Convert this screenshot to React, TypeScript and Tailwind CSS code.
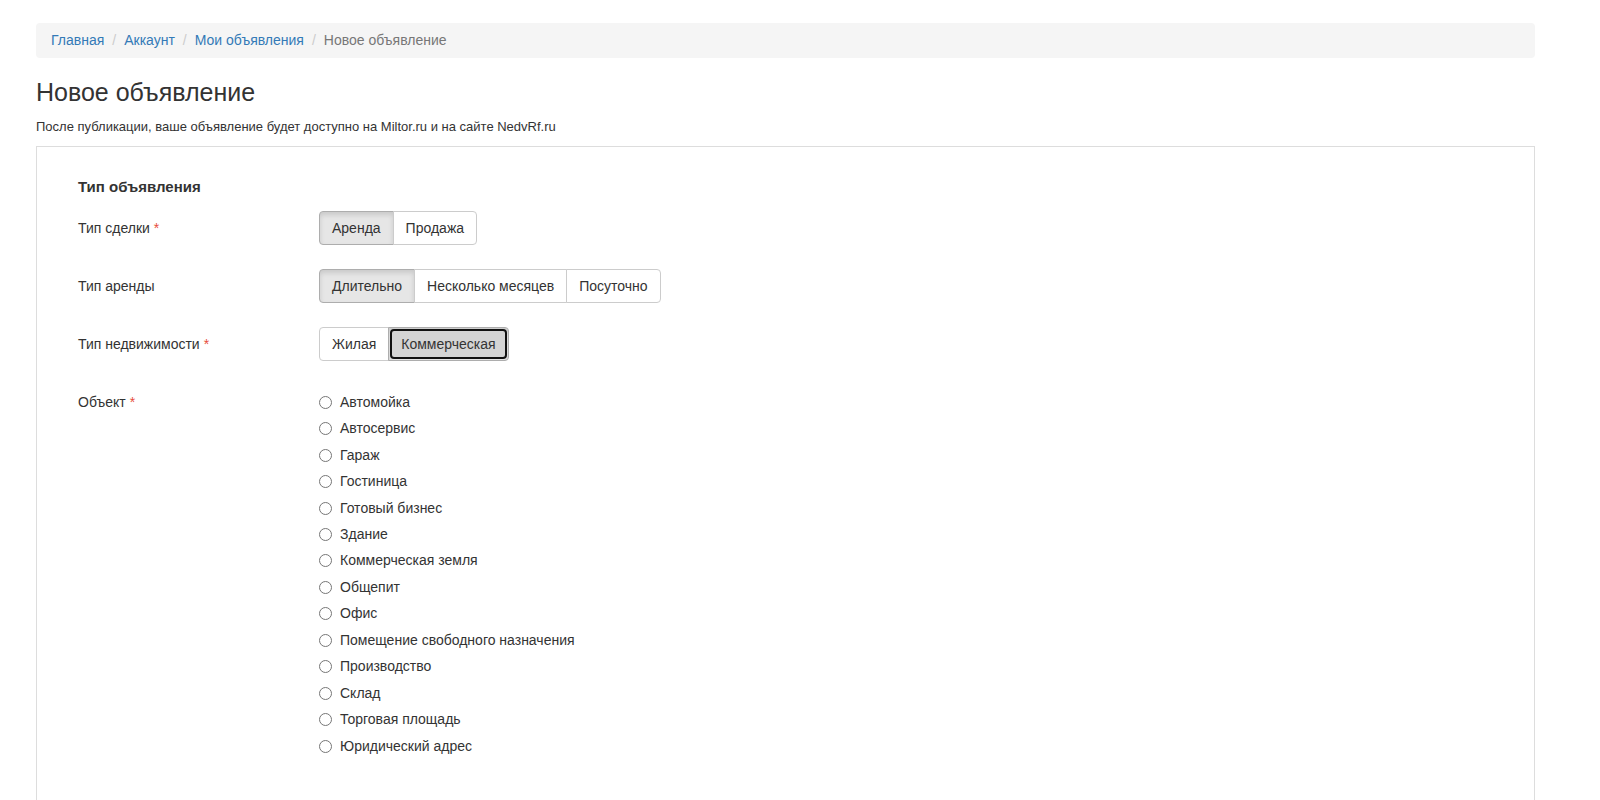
import React, { useState } from 'react';

const objects = [
  'Автомойка',
  'Автосервис',
  'Гараж',
  'Гостиница',
  'Готовый бизнес',
  'Здание',
  'Коммерческая земля',
  'Общепит',
  'Офис',
  'Помещение свободного назначения',
  'Производство',
  'Склад',
  'Торговая площадь',
  'Юридический адрес',
];

const Required = () => <span className="text-[#e74c3c] ml-1">*</span>;

interface GroupProps {
  options: string[];
  value: string;
  focused?: string;
  onChange: (v: string) => void;
}

const ButtonGroup = ({ options, value, focused, onChange }: GroupProps) => (
  <div className="flex">
    {options.map((opt, i) => {
      const active = opt === value;
      const isFocused = opt === focused;
      const first = i === 0;
      const last = i === options.length - 1;
      return (
        <button
          key={opt}
          type="button"
          onClick={() => onChange(opt)}
          className={`relative h-[34px] px-3 text-[14px] text-[#333] border ${
            first ? 'rounded-l-[4px]' : '-ml-px'
          } ${last ? 'rounded-r-[4px]' : ''} ${
            active
              ? 'bg-[#e6e6e6] border-[#adadad] shadow-[inset_0_3px_5px_rgba(0,0,0,0.125)]'
              : 'bg-white border-[#ccc]'
          }`}
        >
          {isFocused && (
            <span className="absolute inset-[1px] rounded-[4px] border-2 border-[#111] bg-[#d4d4d4]" />
          )}
          <span className="relative">{opt}</span>
        </button>
      );
    })}
  </div>
);

const Row = ({ label, children, required }: { label: string; required?: boolean; children: React.ReactNode }) => (
  <div className="flex items-center h-[34px]">
    <div className="w-[241px] shrink-0 text-[14px] text-[#333]">
      {label}
      {required && <Required />}
    </div>
    {children}
  </div>
);

export default function App() {
  const [deal, setDeal] = useState('Аренда');
  const [rent, setRent] = useState('Длительно');
  const [estate, setEstate] = useState('Коммерческая');
  const [obj, setObj] = useState('');

  return (
    <div
      className="min-h-screen bg-white pl-[36px] pr-[65px] pt-[23px] text-[#333]"
      style={{ fontFamily: '"Liberation Sans", Arial, sans-serif' }}
    >
      <ol className="flex items-center h-[35px] px-[15px] bg-[#f5f5f5] rounded-[4px] text-[14px]">
        <li><a href="#" className="text-[#337ab7]">Главная</a></li>
        <li className="px-[8px] text-[#ccc]">/</li>
        <li><a href="#" className="text-[#337ab7]">Аккаунт</a></li>
        <li className="px-[8px] text-[#ccc]">/</li>
        <li><a href="#" className="text-[#337ab7]">Мои объявления</a></li>
        <li className="px-[8px] text-[#ccc]">/</li>
        <li className="text-[#777]">Новое объявление</li>
      </ol>

      <h1 className="mt-[20px] text-[25px] leading-[28px] text-[#333]">Новое объявление</h1>
      <p className="mt-[12px] text-[13px] leading-[18px]">
        После публикации, ваше объявление будет доступно на Miltor.ru и на сайте NedvRf.ru
      </p>

      <div className="mt-[10px] border border-[#ddd] border-b-0 min-h-[700px] pl-[41px] pt-[30px]">
        <h4 className="text-[15px] font-bold leading-[20px]">Тип объявления</h4>

        <div className="mt-[14px] flex flex-col gap-[24px]">
          <Row label="Тип сделки" required>
            <ButtonGroup options={['Аренда', 'Продажа']} value={deal} onChange={setDeal} />
          </Row>
          <Row label="Тип аренды">
            <ButtonGroup
              options={['Длительно', 'Несколько месяцев', 'Посуточно']}
              value={rent}
              onChange={setRent}
            />
          </Row>
          <Row label="Тип недвижимости" required>
            <ButtonGroup
              options={['Жилая', 'Коммерческая']}
              value={estate}
              focused="Коммерческая"
              onChange={setEstate}
            />
          </Row>
        </div>

        <div className="mt-[28px] flex">
          <div className="w-[241px] shrink-0 text-[14px] h-[26.5px] flex items-center">
            Объект
            <Required />
          </div>
          <div className="flex flex-col">
            {objects.map(o => (
              <label key={o} className="flex items-center h-[26.46px] text-[14px] cursor-pointer">
                <input
                  type="radio"
                  name="object"
                  checked={obj === o}
                  onChange={() => setObj(o)}
                  className="w-[13px] h-[13px] m-0 mr-[8px] accent-[#337ab7]"
                />
                {o}
              </label>
            ))}
          </div>
        </div>
      </div>
    </div>
  );
}
